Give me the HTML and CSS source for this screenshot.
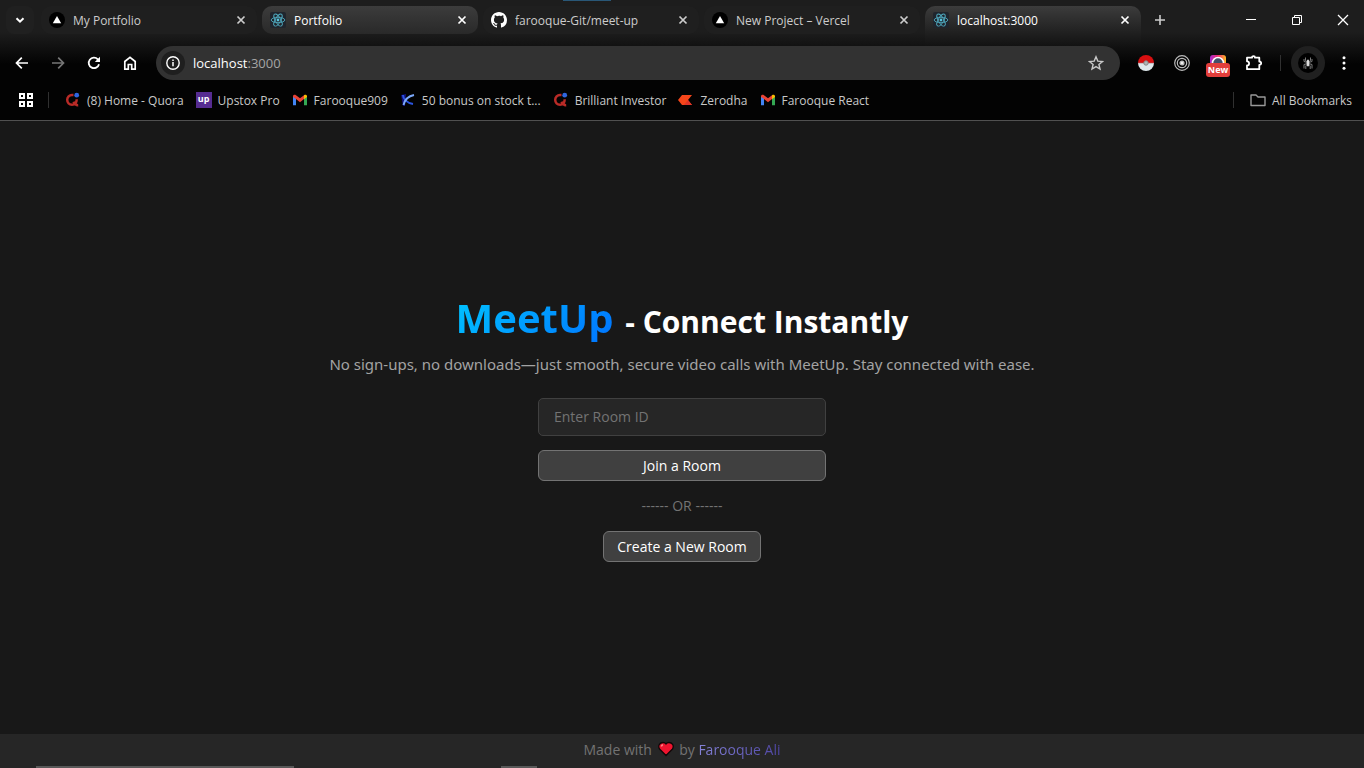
FILE: index.html
```html
<!DOCTYPE html>
<html lang="en">
<head>
<meta charset="utf-8">
<title>MeetUp</title>
<link rel="stylesheet" href="styles.css">
</head>
<body>
<svg class="defs" aria-hidden="true">
  <defs>
    <symbol id="close" viewBox="0 0 16 16"><path d="M4.5 4.5l7 7M11.5 4.5l-7 7" stroke="currentColor" stroke-width="1.7" fill="none"/></symbol>
    <symbol id="vercel" viewBox="0 0 16 16"><circle cx="8" cy="8" r="8" fill="#000"/><path d="M8 4l4.2 7.2H3.8z" fill="#fff"/></symbol>
    <symbol id="react" viewBox="0 0 16 16"><rect width="16" height="16" rx="2" fill="#20252d"/><g fill="none" stroke="#4fa9be" stroke-width="0.9"><ellipse cx="8" cy="8" rx="6.8" ry="2.7"/><ellipse cx="8" cy="8" rx="6.8" ry="2.7" transform="rotate(60 8 8)"/><ellipse cx="8" cy="8" rx="6.8" ry="2.7" transform="rotate(120 8 8)"/></g><circle cx="8" cy="8" r="1.4" fill="#58c4dc"/></symbol>
    <symbol id="quora" viewBox="0 0 16 16"><path d="M8.500 3H7A4.800 4.800 0 0 0 2.200 7.800C2.200 10.800 4.200 12.700 7 12.700S11.700 10.800 11.700 7.200M8.500 9.800C9.500 12 10.500 13.400 13.200 13.200" fill="none" stroke="#b92b27" stroke-width="2.500"/><circle cx="11.700" cy="3.200" r="2.400" fill="#2f66e0"/></symbol>
    <symbol id="gmail" viewBox="0 0 16 16"><path d="M1 4v9.200h3V6z" fill="#4285f4"/><path d="M15 4v9.200h-3V6z" fill="#34a853"/><path d="M1 4.200C1 2.700 2.800 2.300 4 3.200L8 6.300l4-3.100V7L8 10.200 4 7 1 4.900z" fill="#ea4335"/><path d="M12 3.200c1.200-.9 3-.5 3 1v.9L12 7.300z" fill="#fbbc04"/></symbol>
  </defs>
</svg>

<header class="browser">
  <nav class="tabs" aria-label="Tabs">
    <button class="tab-search" aria-label="Search tabs"><svg viewBox="0 0 16 16"><path d="M4.500 6.200L8 9.700l3.500-3.500" stroke="currentColor" stroke-width="2" fill="none"/></svg></button>
    <div class="tab"><svg class="icon"><use href="#vercel"/></svg><span class="tab-title">My Portfolio</span><button class="tab-close" aria-label="Close My Portfolio"><svg class="icon"><use href="#close"/></svg></button></div>
    <div class="tab tab-lit"><svg class="icon"><use href="#react"/></svg><span class="tab-title">Portfolio</span><button class="tab-close" aria-label="Close Portfolio"><svg class="icon"><use href="#close"/></svg></button></div>
    <div class="tab"><svg class="icon" viewBox="0 0 16 16"><path fill="#fff" d="M8 0C3.580 0 0 3.580 0 8c0 3.540 2.290 6.530 5.470 7.590.4.070.55-.17.55-.38 0-.19-.01-.82-.01-1.490-2.010.37-2.530-.49-2.690-.94-.09-.23-.48-.94-.82-1.130-.28-.15-.68-.52-.01-.53.63-.01 1.080.58 1.230.82.72 1.210 1.870.87 2.330.66.07-.52.28-.87.51-1.070-1.780-.2-3.640-.89-3.640-3.950 0-.87.31-1.590.82-2.150-.08-.2-.36-1.020.08-2.120 0 0 .67-.21 2.200.82A7.600 7.600 0 0 1 8 3.870c.68 0 1.360.09 2 .27 1.530-1.040 2.200-.82 2.200-.82.44 1.100.16 1.920.08 2.120.51.56.82 1.270.82 2.150 0 3.070-1.870 3.750-3.650 3.950.29.25.54.73.54 1.480 0 1.070-.01 1.930-.01 2.200 0 .21.15.46.55.38A8 8 0 0 0 16 8c0-4.420-3.580-8-8-8z"/></svg><span class="tab-title">farooque-Git/meet-up</span><button class="tab-close" aria-label="Close farooque-Git/meet-up"><svg class="icon"><use href="#close"/></svg></button></div>
    <div class="tab"><svg class="icon"><use href="#vercel"/></svg><span class="tab-title">New Project – Vercel</span><button class="tab-close" aria-label="Close New Project"><svg class="icon"><use href="#close"/></svg></button></div>
    <div class="tab tab-lit tab-active"><svg class="icon"><use href="#react"/></svg><span class="tab-title">localhost:3000</span><button class="tab-close" aria-label="Close localhost:3000"><svg class="icon"><use href="#close"/></svg></button></div>
    <button class="new-tab" aria-label="New tab"><svg class="icon" viewBox="0 0 16 16"><path d="M8 3v10M3 8h10" stroke="currentColor" stroke-width="1.600"/></svg></button>
    <div class="window-controls">
      <button aria-label="Minimize"><svg class="icon" viewBox="0 0 16 16"><path d="M3 7.500h10" stroke="currentColor"/></svg></button>
      <button aria-label="Restore"><svg class="icon" viewBox="0 0 16 16"><path d="M3.500 5.500h7v7h-7zM5.500 5.500v-2h7v7h-2" stroke="currentColor" fill="none"/></svg></button>
      <button aria-label="Close window"><svg class="icon" viewBox="0 0 16 16"><path d="M3 3l10 10M13 3L3 13" stroke="currentColor" stroke-width="1.300"/></svg></button>
    </div>
  </nav>

  <div class="toolbar">
    <div class="nav-buttons">
      <button aria-label="Back"><svg class="icon" viewBox="0 0 16 16"><path d="M14 8H3M7.800 2.700L2.500 8l5.300 5.300" stroke="currentColor" stroke-width="1.700" fill="none"/></svg></button>
      <button class="dim" aria-label="Forward"><svg class="icon" viewBox="0 0 16 16"><path d="M2 8h11M8.200 2.700L13.500 8l-5.300 5.300" stroke="currentColor" stroke-width="1.700" fill="none"/></svg></button>
      <button aria-label="Reload"><svg class="icon" viewBox="0 0 16 16"><path d="M13 9.200A5.200 5.200 0 1 1 11.800 4.400L13.200 6" stroke="currentColor" stroke-width="1.800" fill="none"/><path d="M14 1.800V7H8.800z" fill="currentColor"/></svg></button>
      <button aria-label="Home"><svg class="icon" viewBox="0 0 16 16"><path d="M2.800 6.500L8 2.400l5.200 4.100v7.700H9.700V9.500H6.300v4.700H2.800z" stroke="currentColor" stroke-width="1.700" fill="none"/></svg></button>
    </div>
    <div class="address">
      <button class="site-info" aria-label="Site information"><svg class="icon" viewBox="0 0 16 16"><circle cx="8" cy="8" r="6.200" stroke="currentColor" stroke-width="1.400" fill="none"/><path d="M8 7v4.200M8 4.500v1.500" stroke="currentColor" stroke-width="1.500"/></svg></button>
      <span class="url">localhost<span class="port">:3000</span></span>
      <button class="star" aria-label="Bookmark this tab"><svg class="icon" viewBox="0 0 16 16"><path d="M8 1.800l1.800 4.300 4.700.4-3.600 3 1.100 4.600-4-2.500-4 2.500 1.100-4.600-3.600-3 4.700-.4z" stroke="currentColor" stroke-width="1.400" fill="none"/></svg></button>
    </div>
    <div class="extensions">
      <button aria-label="Pokeball extension"><svg class="icon" viewBox="0 0 16 16"><path d="M0 8a8 8 0 0 1 16 0z" fill="#d80f10"/><path d="M0 8a8 8 0 0 0 16 0z" fill="#dfe9ed"/><path d="M0 8h16" stroke="#a06065" stroke-width=".6"/><circle cx="8" cy="8" r="2.200" fill="#aeb7b8" stroke="#888"/></svg></button>
      <button aria-label="Target extension"><svg class="icon" viewBox="0 0 16 16" fill="none" stroke="#bbb" stroke-width="1.200"><circle cx="8" cy="8" r="7.300"/><circle cx="8" cy="8" r="4.700"/><circle cx="8" cy="8" r="2" fill="#eee"/></svg></button>
      <button class="badged" aria-label="Camera extension"><svg class="icon" viewBox="0 0 16 16"><defs><linearGradient id="cam"><stop offset="0" stop-color="#a82bd0"/><stop offset=".5" stop-color="#ef2c6c"/><stop offset="1" stop-color="#ffbd25"/></linearGradient></defs><rect width="16" height="16" rx="3" fill="url(#cam)"/><circle cx="8" cy="8" r="5.500" fill="#42506a" stroke="#fff" stroke-width="1.600"/></svg><span class="badge">New</span></button>
      <button aria-label="Extensions"><svg class="icon" viewBox="0 0 16 16"><path d="M1 2.700H6C6 .6 9 .6 9 2.700H13.300V6.500C15.800 6.500 15.800 9.800 13.300 9.800V14.200H1V10.500C3.800 10.500 3.800 6.300 1 6.300z" stroke="currentColor" stroke-width="1.800" stroke-linejoin="round" fill="none"/></svg></button>
      <span class="divider"></span>
      <button class="profile" aria-label="Profile"><svg viewBox="0 0 20 20"><circle cx="10" cy="10" r="10" fill="#000"/><g stroke="#888" stroke-width=".9" fill="none"><path d="M9.500 9L7.500 7.500V4.500M10.500 9l2-1.500v-3M9.500 9.500L6 8.500V6M10.500 9.500l3.500-1V6M9.500 10.500L6 11.500v4M10.500 10.500l3.500 1v4M9.500 11L7.800 13v3M10.500 11l1.700 2v3"/></g><ellipse cx="10" cy="10" rx="1.300" ry="3.500" fill="#ddd"/></svg></button>
      <button class="menu" aria-label="Menu"><svg class="icon" viewBox="0 0 16 16" fill="currentColor"><circle cx="8" cy="2.700" r="1.500"/><circle cx="8" cy="8" r="1.500"/><circle cx="8" cy="13.300" r="1.500"/></svg></button>
    </div>
  </div>

  <nav class="bookmarks" aria-label="Bookmarks">
    <button class="apps" aria-label="Apps"><svg class="icon" viewBox="0 0 16 16"><path d="M2 2h4v4H2zM10 2h4v4h-4zM2 10h4v4H2zM10 10h4v4h-4z" stroke="currentColor" stroke-width="2" fill="none"/></svg></button>
    <span class="divider"></span>
    <div class="bookmark-list">
      <a href="#"><svg class="icon"><use href="#quora"/></svg>(8) Home - Quora</a>
      <a href="#"><span class="upstox">up</span>Upstox Pro</a>
      <a href="#"><svg class="icon"><use href="#gmail"/></svg>Farooque909</a>
      <a href="#"><svg class="icon" viewBox="0 0 16 16"><path d="M1 3l5-1-1 12H3z" fill="#10107a"/><path d="M3 3c0 4 4 8 10 9" stroke="#2b55e0" stroke-width="2" fill="none"/><path d="M3.500 13C5 7 9 4 14 3" stroke="#7ba8fa" stroke-width="2" fill="none"/></svg>50 bonus on stock t...</a>
      <a href="#"><svg class="icon"><use href="#quora"/></svg>Brilliant Investor</a>
      <a href="#"><svg class="icon" viewBox="0 0 16 16"><path d="M0 8l4-5h10l-4 5 4 5H4z" fill="#f6461a"/><path d="M10 8l4 5H6z" fill="#df3328"/></svg>Zerodha</a>
      <a href="#"><svg class="icon"><use href="#gmail"/></svg>Farooque React</a>
    </div>
    <div class="all-bookmarks">
      <span class="divider"></span>
      <a href="#"><svg class="icon" viewBox="0 0 16 16"><path d="M1 3h5l2 2h7v8.500H1z" stroke="#999" stroke-width="1.400" stroke-linejoin="round" fill="none"/></svg>All Bookmarks</a>
    </div>
  </nav>
  <span class="screen-mark"></span>
</header>

<main class="page">
  <h1><span class="brand">MeetUp</span> - Connect Instantly</h1>
  <p class="tagline">No sign-ups, no downloads—just smooth, secure video calls with MeetUp. Stay connected with ease.</p>
  <form class="join">
    <input type="text" placeholder="Enter Room ID" aria-label="Room ID">
    <button class="action" type="button">Join a Room</button>
  </form>
  <p class="or">------ OR ------</p>
  <button class="action" type="button">Create a New Room</button>
</main>

<footer class="footer">
  <p>Made with <svg class="icon heart" viewBox="0 0 16 16" role="img" aria-label="love"><path d="M8 14.500L1.500 8C-.5 4.500 2 1.500 5 1.500c1.500 0 2.500.7 3 1.500.5-.8 1.500-1.500 3-1.500 3 0 5.500 3 3.500 6.500z" fill="#f0142f" stroke="#100808" stroke-width="1.300"/><path d="M3.300 5.500c.2-1 .8-1.600 1.700-1.800" stroke="#ff8585" stroke-width="1.500" fill="none"/></svg> by <a href="#">Farooque Ali</a></p>
  <span class="taskbar-edge edge-long"></span>
  <span class="taskbar-edge edge-short"></span>
</footer>
</body>
</html>
```
FILE: styles.css
```css
* { box-sizing: border-box; }

body {
  display: flex;
  flex-direction: column;
  min-height: 100vh;
  margin: 0;
  background: #181818;
  color: #fff;
  font-family: "Open Sans", "Noto Sans", sans-serif;
}

button, input { font: inherit; }
button { color: inherit; cursor: pointer; }
a { color: inherit; text-decoration: none; }
p, h1 { margin: 0; }

.defs { position: absolute; width: 0; height: 0; }
.icon { display: block; flex: none; width: 16px; height: 16px; }

.browser {
  position: relative;
  background: linear-gradient(#1d1d1d 0, #1d1d1d 32px, #030303 64px, #030303 100%);
  border-bottom: 1px solid #505050;
  font-size: 12px;
}
.browser button {
  display: flex;
  align-items: center;
  justify-content: center;
  flex: none;
  padding: 0;
  border: 0;
  background: none;
}
.divider { flex: none; width: 1px; height: 16px; background: #303030; }
.screen-mark {
  position: absolute;
  top: 0;
  left: 563px;
  width: 48px;
  height: 1px;
  background: #295777;
}

.tabs { display: flex; padding: 6px 0 0 6px; }
.browser .tab-search {
  width: 28px;
  height: 28px;
  margin-right: 7px;
  border-radius: 8px;
  background: #202020;
}
.tab-search svg { width: 16px; height: 16px; }
.tab {
  display: flex;
  align-items: center;
  flex: 0 1 216px;
  gap: 8px;
  min-width: 0;
  height: 28px;
  margin-right: 5px;
  padding: 0 8px;
  border-radius: 10px;
  background: #1f1f1f;
  color: #ccc;
}
.tab-lit { background: linear-gradient(#3c3c3c, #292929); color: #fff; }
.tab-active {
  height: 40px;
  padding-bottom: 12px;
  border-radius: 10px 10px 0 0;
  background: linear-gradient(#3c3c3c, #121212);
}
.tab-title { flex: 1; overflow: hidden; white-space: nowrap; }
.browser .new-tab { width: 28px; height: 28px; color: #ccc; }
.window-controls { display: flex; margin-left: auto; }
.browser .window-controls button { width: 46px; height: 28px; }
.window-controls button:last-child { margin-right: -2px; }

.toolbar { display: flex; align-items: center; height: 34px; }
.nav-buttons { display: flex; gap: 20px; padding: 0 18px 0 14px; }
.dim { opacity: .45; }
.address {
  display: flex;
  align-items: center;
  flex: 1;
  height: 34px;
  padding: 0 16px 0 5px;
  border-radius: 17px;
  background: #323232;
  font-size: 13px;
}
.browser .site-info {
  width: 24px;
  height: 24px;
  margin-right: 8px;
  border-radius: 50%;
  background: #1f1f1f;
}
.port { color: #a5a5a5; }
.browser .star { margin-left: auto; color: #c9c9c9; }
.extensions { display: flex; align-items: center; gap: 20px; padding: 0 12px 0 18px; }
.extensions .divider { margin: 0 -10px 0 -2px; }
.badged { position: relative; }
.badge {
  position: absolute;
  top: 8px;
  left: -4px;
  width: 24px;
  border-radius: 3px;
  background: #e23e3b;
  font-size: 9px;
  font-weight: 700;
  line-height: 14px;
  text-align: center;
}
.browser .profile {
  width: 34px;
  height: 34px;
  margin-right: -9px;
  border-radius: 50%;
  background: #202020;
}
.profile svg { width: 20px; height: 20px; }

.bookmarks {
  display: flex;
  align-items: center;
  height: 40px;
  padding: 0 12px 0 18px;
  color: #c8c8c8;
}
.browser .apps { margin-right: 14px; color: #fff; }
.bookmark-list { display: flex; gap: 12px; margin-left: 16px; }
.bookmarks a { display: flex; align-items: center; gap: 6px; white-space: nowrap; }
.upstox {
  width: 16px;
  height: 16px;
  background: #562c91;
  color: #fff;
  font-size: 9px;
  font-weight: 700;
  line-height: 14px;
  text-align: center;
}
.all-bookmarks { display: flex; align-items: center; gap: 16px; margin-left: auto; }

.page {
  display: flex;
  flex: 1;
  flex-direction: column;
  align-items: center;
  justify-content: center;
  padding-bottom: 6px;
}
h1 { font-size: 30px; line-height: 60px; text-align: center; }
.brand {
  margin-right: 4px;
  background: linear-gradient(135deg, #00c6ff, #0072ff);
  background-clip: text;
  color: transparent;
  font-size: 40px;
}
.tagline {
  margin-bottom: 22px;
  color: #a3a3a3;
  font-family: "Noto Sans", "Open Sans", sans-serif;
  font-size: 15px;
  line-height: 24px;
  text-align: center;
}
.join { display: flex; flex-direction: column; gap: 14px; width: 288px; }
.join input {
  width: 100%;
  height: 38px;
  padding: 0 15px;
  border: 1px solid #404040;
  border-radius: 5px;
  background: #262626;
  color: #fff;
  font-size: 14px;
}
.join input::placeholder { color: #737373; }
.action {
  height: 31px;
  padding: 0 13px;
  border: 1px solid #737373;
  border-radius: 6px;
  background: #404040;
  font-size: 14px;
}
.or { margin: 15px 0; color: #737373; font-size: 14px; line-height: 20px; }

.footer {
  position: relative;
  padding: 6px 0 8px;
  background: #262626;
  color: #737373;
  font-size: 14px;
  line-height: 20px;
  text-align: center;
}
.heart { display: inline-block; margin: 0 2px; vertical-align: -2px; }
.footer a {
  background: linear-gradient(90deg, #8583d8, #4f46a5);
  background-clip: text;
  color: transparent;
}
.taskbar-edge { position: absolute; bottom: 0; height: 2px; background: #595959; }
.edge-long { left: 36px; width: 258px; }
.edge-short { left: 501px; width: 36px; }
```
